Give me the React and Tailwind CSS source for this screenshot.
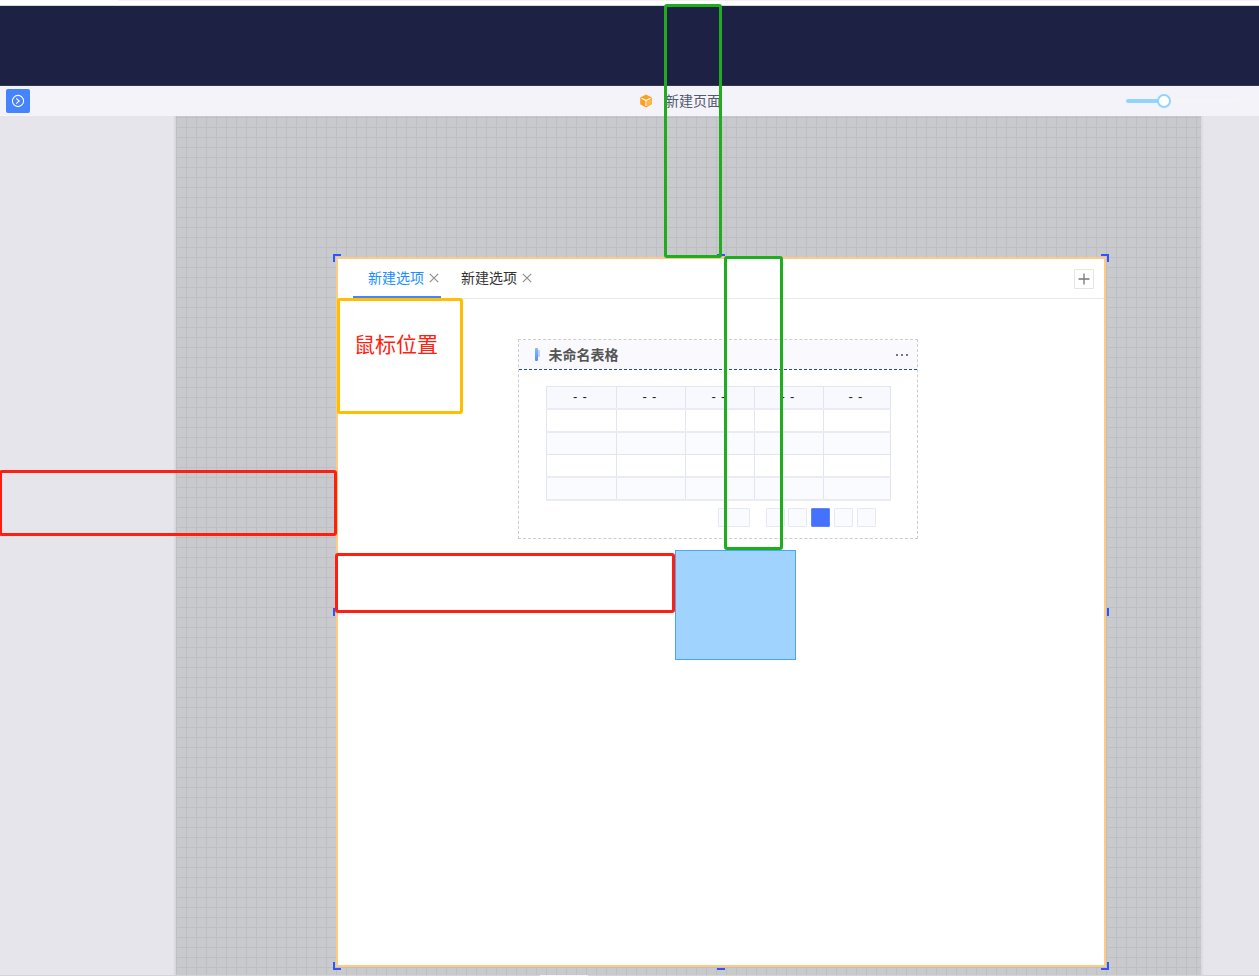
const FONT = "font-['Noto_Sans_CJK_SC',sans-serif]";

function ExpandIcon() {
  return (
    <svg width="14" height="14" viewBox="0 0 14 14" fill="none" stroke="#fff">
      <circle cx="7" cy="7" r="5.6" strokeWidth="1.1" />
      <path d="M5.2 4.3 8.2 7 5.2 9.7" strokeWidth="1.1" />
    </svg>
  );
}

function CubeIcon() {
  return (
    <svg width="12" height="14" viewBox="0 0 12 14">
      <path d="M6 .5 11.8 3.4V10.3L6 13.5.2 10.3V3.4Z" fill="#faa21f" />
      <path d="M1.6 4.3 6 6.6 10.4 4.3M6 6.6V12" fill="none" stroke="#fff" strokeWidth="1.1" />
      <path d="M6.6 7.2 11 5v5l-4.4 2.5Z" fill="#fbb84f" />
    </svg>
  );
}

function CloseIcon() {
  return (
    <svg width="10" height="10" viewBox="0 0 10 10" fill="none" stroke="#8c8c8c" strokeWidth="1.1">
      <path d="M.8.8 9.2 9.2M9.2.8.8 9.2" />
    </svg>
  );
}

function Toolbar() {
  return (
    <div className="flex h-[30px] shrink-0 items-center bg-[#f4f3f9]">
      <button className="ml-1.5 flex h-6 w-6 items-center justify-center rounded-[2px] bg-[#4683ff]">
        <ExpandIcon />
      </button>
      <div className="ml-[610px] flex w-[82px] items-center">
        <CubeIcon />
        <span className="ml-[13px] pb-0.5 text-sm leading-[28px] whitespace-nowrap text-[#515a6e]">新建页面</span>
      </div>
      <div className="ml-[404px] flex items-center">
        <div className="h-1 w-[32px] rounded-l-full bg-[#91d5ff]" />
        <div className="-ml-px h-3.5 w-3.5 rounded-full border-2 border-[#91d5ff] bg-white" />
        <div className="h-1 w-[68px] rounded-r-full bg-[#f5f5f5]" />
      </div>
    </div>
  );
}

const rows = [
  "h-6 border-b-2 border-[#eaebf6] bg-[#f8f9fe]",
  "h-[23px] border-b-2 border-[#e9eaf5] bg-white",
  "h-[22px] border-b border-[#e3e4f2] bg-[#fafbff]",
  "h-[23px] border-b-2 border-[#eaebf6] bg-white",
  "h-[23px] border-b-2 border-[#eaebf6] bg-[#fafbff]",
];

const pageBoxes = [
  "mr-4 w-8 border border-[#e6e8f6] bg-[#fafbff]",
  "mr-[3px] w-[19px] border border-[#e6e8f6] bg-[#fafbff]",
  "mr-1 w-[19px] border border-[#e6e8f6] bg-[#fafbff]",
  "mr-1 w-[19px] border border-[#5f84ff] bg-[#4472ff]",
  "mr-[3.5px] w-[19px] border border-[#e6e8f6] bg-[#fafbff]",
  "w-[19px] border border-[#e6e8f6] bg-[#fafbff]",
];

function TableCard() {
  return (
    <div className="mt-10 ml-[180px] h-[200px] w-[400px] border border-dashed border-[#ccc]">
      <div className="flex h-[30px] items-center border-b border-dashed border-[#1a47dc] bg-[#f9f9fe] pr-[9px] pl-4">
        <svg width="5" height="13" viewBox="0 0 5 13">
          <rect x="2" y="2" width="3" height="7" rx="1" fill="#b9d2ff" />
          <rect width="3" height="13" rx="1" fill="url(#barFill)" />
          <defs>
            <linearGradient id="barFill" x1="0" y1="0" x2="0" y2="1">
              <stop stopColor="#83baff" />
              <stop offset="1" stopColor="#5b8dfb" />
            </linearGradient>
          </defs>
        </svg>
        <span className="ml-[8.5px] pb-0.5 text-sm font-bold text-[#555]">未命名表格</span>
        <div className="ml-auto flex gap-[3px]">
          <i className="h-0.5 w-0.5 bg-[#777]" />
          <i className="h-0.5 w-0.5 bg-[#777]" />
          <i className="h-0.5 w-0.5 bg-[#777]" />
        </div>
      </div>
      <div className="mt-4 ml-[27px] w-[345px] border-t border-[#e3e4f2]">
        {rows.map((row, r) => (
          <div key={r} className={`grid grid-cols-[71px_69px_69px_69px_67px] first:h-[23px] ${row}`}>
            {[0, 1, 2, 3, 4].map((c) => (
              <div
                key={c}
                className="flex items-center justify-center border-r border-[#e3e4f2] pr-[3px] first:border-l"
              >
                {r === 0 && (
                  <span className="pb-0.5 font-['Liberation_Sans',sans-serif] text-[13px] leading-[18px] [word-spacing:1.5px] whitespace-nowrap text-[#222]">- -</span>
                )}
              </div>
            ))}
          </div>
        ))}
      </div>
      <div className="mt-[7px] ml-[199px] flex">
        {pageBoxes.map((box, i) => (
          <div key={i} className={`h-[19px] shrink-0 rounded-[1px] ${box}`} />
        ))}
      </div>
    </div>
  );
}

function ResizeHandles() {
  return (
    <>
      <i className="absolute -top-[5px] -left-[5px] h-2 w-2 border-t-2 border-l-2 border-[#2f54ff]" />
      <i className="absolute -top-[5px] -right-[5px] h-2 w-2 border-t-2 border-r-2 border-[#2f54ff]" />
      <i className="absolute -bottom-[5px] -left-[5px] h-2 w-2 border-b-2 border-l-2 border-[#2f54ff]" />
      <i className="absolute -right-[5px] -bottom-[5px] h-2 w-2 border-r-2 border-b-2 border-[#2f54ff]" />
      <i className="absolute -top-[5px] left-[379px] h-0.5 w-2 bg-[#2f54ff]" />
      <i className="absolute -bottom-[5px] left-[379px] h-0.5 w-2 bg-[#2f54ff]" />
      <i className="absolute top-[349px] -left-[5px] h-2 w-0.5 bg-[#2f54ff]" />
      <i className="absolute top-[349px] -right-[5px] h-2 w-0.5 bg-[#2f54ff]" />
    </>
  );
}

function TabPanel() {
  return (
    <div className="relative mt-[141px] ml-40 h-[710px] w-[770px] border-2 border-[#ffcb83] bg-white">
      <ResizeHandles />
      <div className="flex h-10 border-b border-[#e8e8e8] pr-2.5 pl-[15px]">
        <div className="flex h-[39px] w-[88px] items-center border-b-2 border-[#4683ff] pl-[15px]">
          <span className="pb-0.5 text-sm text-[#1890ff]">新建选项</span>
          <span className="ml-[5px]"><CloseIcon /></span>
        </div>
        <div className="ml-[5px] flex h-[37px] items-center pl-[15px]">
          <span className="pb-0.5 text-sm text-[#333]">新建选项</span>
          <span className="ml-[5px]"><CloseIcon /></span>
        </div>
        <button className="mt-2.5 ml-auto flex h-5 w-5 items-center justify-center rounded-[1px] border border-[#e4e4e4] bg-white">
          <svg width="12" height="12" viewBox="0 0 12 12" stroke="#777" strokeWidth="1.3">
            <path d="M6 .5V11.5M.5 6H11.5" />
          </svg>
        </button>
      </div>
      <TableCard />
    </div>
  );
}

function Annotations() {
  return (
    <>
      <div className="absolute top-[550px] left-[675px] h-[110px] w-[121px] border border-[#46a6fc] bg-[#a1d3ff]" />
      <div className="absolute top-1 left-[664px] h-[254px] w-[58px] rounded-[3px] border-3 border-[#1ead1c]" />
      <div className="absolute top-[256px] left-[724px] h-[294px] w-[59px] rounded-[3px] border-3 border-[#1ead1c]" />
      <div className="absolute top-[470px] -left-px h-[66px] w-[338px] rounded-[3px] border-3 border-[#ff1e10]" />
      <div className="absolute top-[553px] left-[335px] h-[60px] w-[340px] rounded-[3px] border-3 border-[#ff1e10]" />
      <div className="absolute top-[298px] left-[337px] h-[116px] w-[126px] rounded-[3px] border-3 border-[#ffbf00] pt-[27px] pl-3.5 text-[21px] leading-[30px] whitespace-nowrap text-[#ff1e10]">
        鼠标位置
      </div>
    </>
  );
}

export default function App() {
  return (
    <div className={`relative flex h-[976px] w-[1259px] flex-col overflow-hidden bg-white ${FONT}`}>
      <div className="h-[6px] shrink-0 border-b border-[#d5dcdc]">
        <div className="ml-[118px] h-px bg-[#f2f2f2]" />
      </div>
      <header className="h-20 shrink-0 border-b border-[#343657] bg-[#1d2244]" />
      <Toolbar />
      <main className="flex h-[859px] shrink-0">
        <aside className="w-44 shrink-0 bg-[linear-gradient(to_right,#e6e5eb_173px,#d3d3d9_176px)]" />
        <section className="w-[1025px] shrink-0 bg-[#c9cacd] bg-[linear-gradient(to_right,#bebfc2_1px,transparent_1px),linear-gradient(to_bottom,#bebfc2_1px,transparent_1px)] bg-[size:10px_10px] bg-[position:0_1px]">
          <TabPanel />
        </section>
        <aside className="flex-1 bg-[linear-gradient(to_right,#d7d7dc_0px,#e6e5eb_3px)]" />
      </main>
      <footer className="flex h-px shrink-0 bg-[#d4d4d4]">
        <div className="ml-[540px] w-12 bg-[#f5f5f5]" />
      </footer>
      <Annotations />
    </div>
  );
}
